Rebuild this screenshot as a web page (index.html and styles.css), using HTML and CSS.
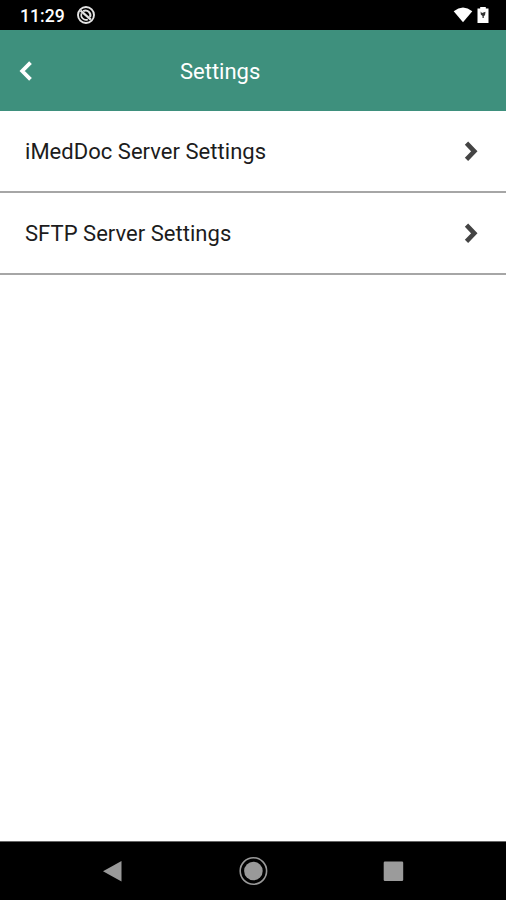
FILE: index.html
```html
<!DOCTYPE html>
<html lang="en">
<head>
<meta charset="utf-8">
<title>Settings</title>
<link rel="stylesheet" href="styles.css">
</head>
<body>
<div class="status">
  <span class="clock">11:29</span>
  <svg class="notice" width="20" height="20" viewBox="0 0 20 20" fill="none" stroke="#e4e4e4">
    <circle cx="10" cy="10" r="8" stroke-width="1.9"/>
    <path d="M7.2 6.2A4.8 4.8 0 0 1 14 12.2" stroke-width="2"/>
    <path d="M5.6 8.3A4.7 4.7 0 0 0 11.8 14.4" stroke-width="1.6"/>
    <path d="M4.6 5.6L14.8 14.6" stroke-width="2.2"/>
  </svg>
  <svg class="wifi" width="20" height="16" viewBox="0 0 20 16"><path d="M.7 4.2Q10-3.2 19.3 4.2L10 15.2Z" fill="#fff"/></svg>
  <svg class="battery" width="12" height="18" viewBox="0 0 12 18">
    <path d="M3.2 1H8.8V2.5H11.5V17H.5V2.5H3.2Z" fill="#fff"/>
    <path d="M3.6 5.5L5 7L8.5 5.8L8 9.2L6.8 10V12H5.5V10L3.8 8.6Z" fill="#333"/>
  </svg>
</div>
<header class="header">
  <svg class="back" width="14" height="22" viewBox="0 0 14 22"><path d="M11.5 2.6L3.2 11L11.5 19.4" fill="none" stroke="#fff" stroke-width="3.8"/></svg>
  <h1 class="title">Settings</h1>
</header>
<main class="list">
  <a class="row"><span class="label">iMedDoc Server Settings</span><svg class="chevron" width="14" height="22" viewBox="0 0 14 22"><path d="M2.5 3.2L10.3 11.3L2.5 19.4" fill="none" stroke="#444" stroke-width="4.6"/></svg></a>
  <a class="row"><span class="label">SFTP Server Settings</span><svg class="chevron" width="14" height="22" viewBox="0 0 14 22"><path d="M2.5 3.2L10.3 11.3L2.5 19.4" fill="none" stroke="#444" stroke-width="4.6"/></svg></a>
</main>
<nav class="nav">
  <svg width="30" height="30" viewBox="0 0 30 30"><path d="M23.5 5V25.5L5 15.2Z" fill="#999"/></svg>
  <svg width="30" height="30" viewBox="0 0 30 30"><circle cx="15.4" cy="15" r="13.2" fill="none" stroke="#999" stroke-width="1.6"/><circle cx="15.4" cy="15" r="9.3" fill="#999"/></svg>
  <svg width="30" height="30" viewBox="0 0 30 30"><rect x="5.7" y="5.5" width="19.5" height="19.5" rx="1.2" fill="#9b9b9b"/></svg>
</nav>
</body>
</html>
```
FILE: styles.css
```css
* { box-sizing: border-box; }
body {
  margin: 0;
  height: 900px;
  display: flex;
  flex-direction: column;
  background: #fff;
  font-family: Roboto, sans-serif;
  overflow: hidden;
}
.status {
  height: 30px;
  flex: none;
  display: flex;
  align-items: center;
  padding: 0 17px 0 20px;
  background: #000;
  color: #fff;
}
.clock { width: 44px; font-size: 17.6px; font-weight: 500; line-height: 30px; padding-top: 2px; }
.notice { margin-left: 12px; }
.wifi { margin-left: auto; }
.battery { margin-left: 4px; }
.header {
  height: 81px;
  flex: none;
  display: flex;
  align-items: center;
  padding-left: 19px;
  background: #3e907d;
  color: #fff;
}
.title { margin: 3px 0 0 147px; font-size: 22px; font-weight: 400; line-height: 28px; }
.list { flex: 1; }
.row {
  height: 82px;
  display: flex;
  align-items: center;
  justify-content: space-between;
  padding: 0 28px 0 25px;
  border-bottom: 2px solid #a6a6a6;
  color: #1c1c1c;
}
.label { font-size: 22px; line-height: 28px; letter-spacing: 0.03px; margin-top: 2px; }
.nav {
  height: 59px;
  flex: none;
  display: flex;
  align-items: center;
  gap: 110px;
  padding-left: 98px;
  background: #000;
  border-top: 1px solid #666;
}
```
